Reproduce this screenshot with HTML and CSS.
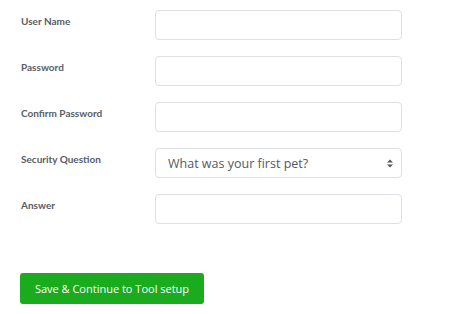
FILE: index.html
```html
<!DOCTYPE html>
<html lang="en">
<head>
  <meta charset="UTF-8">
  <meta name="viewport" content="width=device-width, initial-scale=1.0">
  <title>Account setup</title>
  <link rel="stylesheet" href="styles.css">
</head>
<body>
  <form class="setup-form">
    <div class="row">
      <label for="user-name">User Name</label>
      <input type="text" id="user-name" />
    </div>
    <div class="row">
      <label for="password">Password</label>
      <input type="password" id="password" />
    </div>
    <div class="row">
      <label for="confirm-password">Confirm Password</label>
      <input type="password" id="confirm-password" />
    </div>
    <div class="row">
      <label for="security-question">Security Question</label>
      <div class="select-wrap">
        <select id="security-question">
          <option>What was your first pet?</option>
          <option>What city were you born in?</option>
        </select>
        <svg class="select-arrows" width="6" height="9" viewBox="0 0 6 9">
          <path d="M0 3.5 L3 0.5 L6 3.5 Z M0 5.5 L3 8.5 L6 5.5 Z" fill="#555" />
        </svg>
      </div>
    </div>
    <div class="row">
      <label for="answer">Answer</label>
      <input type="text" id="answer" />
    </div>
    <button type="submit">Save &amp; Continue to Tool setup</button>
  </form>
</body>
</html>
```

FILE: styles.css
```css
body {
  margin: 0;
  padding: 10px 0 0 20px;
  font-family: "Open Sans", Arial, sans-serif;
  background: #fff;
  color: #4a4f55;
}

.setup-form {
  display: flex;
  flex-direction: column;
  align-items: flex-start;
}

.row {
  display: grid;
  grid-template-columns: 135px 247px;
  align-items: start;
  margin-bottom: 16px;
}

label {
  font-family: Lato, Arial, sans-serif;
  font-size: 10px;
  font-weight: 700;
  color: #585d64;
  padding-top: 5px;
  padding-left: 1px;
}

input,
select {
  box-sizing: border-box;
  width: 247px;
  height: 30px;
  border: 1px solid #dde0e4;
  border-radius: 4px;
  background: #fff;
  font-family: "Open Sans", Arial, sans-serif;
  font-size: 12.5px;
  color: #555a60;
  padding: 0 12px;
}

select {
  appearance: none;
  -webkit-appearance: none;
}

.select-wrap {
  position: relative;
}

.select-arrows {
  position: absolute;
  right: 9px;
  top: 11px;
  pointer-events: none;
}

button {
  margin-top: 33px;
  width: 184px;
  height: 31px;
  border: none;
  border-radius: 3px;
  background: #1aab1f;
  color: #fff;
  font-family: "Open Sans", Arial, sans-serif;
  font-size: 11px;
  font-weight: 500;
  cursor: pointer;
}
```
